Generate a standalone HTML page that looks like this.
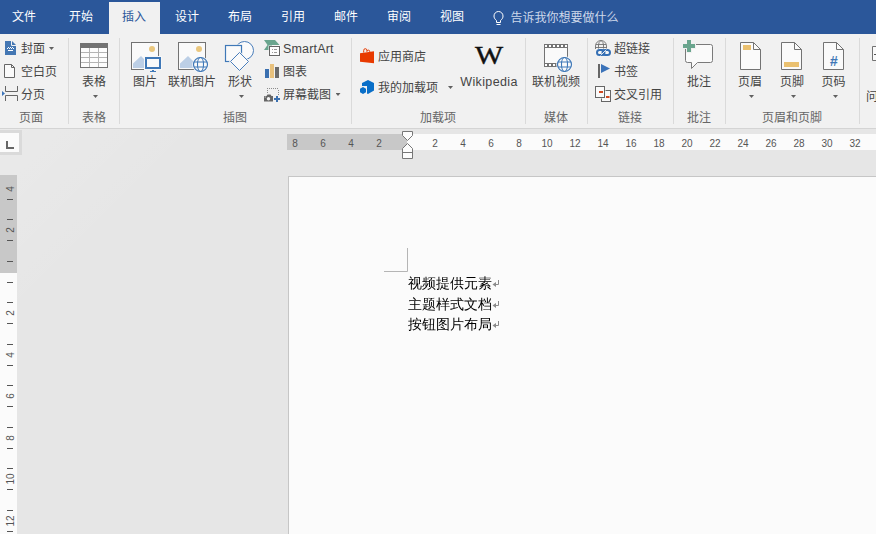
<!DOCTYPE html>
<html lang="zh-CN">
<head>
<meta charset="utf-8">
<title>Word</title>
<style>
*{box-sizing:border-box;margin:0;padding:0}
html,body{width:876px;height:534px;overflow:hidden;background:#e6e6e6}
body{position:relative;font-family:"Liberation Sans","Noto Sans CJK SC",sans-serif;font-size:12px;color:#444}
.abs{position:absolute}
#tabs{left:0;top:0;width:876px;height:34px;background:#2b579a}
.tab{position:absolute;top:1px;height:33px;line-height:33px;color:#fff;font-size:12px;white-space:nowrap}
#active{left:109px;top:2px;width:51px;height:32px;background:#f1f1f1}
#ribbon{left:0;top:34px;width:876px;height:94px;background:#f1f1f1}
#ribline{left:0;top:128px;width:876px;height:1px;background:#d4d4d4}
.sep{position:absolute;top:38px;width:1px;height:86px;background:#dadada}
.glabel{position:absolute;top:110px;height:16px;line-height:16px;font-size:12px;color:#666;white-space:nowrap;transform:translateX(-50%)}
.t{position:absolute;white-space:nowrap;font-size:12px;line-height:16px;color:#444}
.tc{transform:translateX(-50%)}
.arr{position:absolute;width:5px;height:3px;background:#606060;clip-path:polygon(0 0,100% 0,50% 100%)}
svg{position:absolute;overflow:visible}
#hruler{left:287px;top:134px;width:589px;height:16px;background:#fbfbfb}
#hrulerg{left:287px;top:134px;width:120px;height:16px;background:#c8c8c8}
.hn{position:absolute;top:136px;font-size:10px;line-height:16px;color:#555;transform:translateX(-50%);font-family:"Liberation Sans",sans-serif}
#vruler{left:0;top:175px;width:17px;height:359px;background:#fbfbfb}
#vrulerg{left:0;top:175px;width:17px;height:98px;background:#c8c8c8}
.vn{position:absolute;left:4.500px;width:12px;height:12px;font-size:10px;line-height:12px;color:#555;text-align:center;transform:rotate(-90deg);font-family:"Liberation Sans",sans-serif;white-space:nowrap}
.vt{position:absolute;left:7px;width:6px;height:1px;background:#555}
#lbox{left:-3px;top:130px;width:25px;height:25px;background:#fbfbfb;border:3px solid #dadada}
#page{left:288px;top:176px;width:600px;height:370px;background:#fbfbfb;border:1px solid #c6c6c6}
.doc{position:absolute;left:408px;font-family:"Liberation Serif","WenQuanYi Zen Hei",serif;font-size:14px;line-height:20px;color:#000;white-space:nowrap}
</style>
</head>
<body>
<div id="tabs" class="abs"></div>
<div id="active" class="abs"></div>
<div class="tab" style="left:12px">文件</div>
<div class="tab" style="left:69px">开始</div>
<div class="tab" style="left:122px;color:#2b579a">插入</div>
<div class="tab" style="left:175px">设计</div>
<div class="tab" style="left:228px">布局</div>
<div class="tab" style="left:281px">引用</div>
<div class="tab" style="left:334px">邮件</div>
<div class="tab" style="left:387px">审阅</div>
<div class="tab" style="left:440px">视图</div>
<div class="tab" style="left:510.500px;top:2px;color:#cdd8ea">告诉我你想要做什么</div>
<div id="ribbon" class="abs"></div>
<div id="ribline" class="abs"></div>

<!-- separators -->
<div class="sep" style="left:68px"></div>
<div class="sep" style="left:119px"></div>
<div class="sep" style="left:351px"></div>
<div class="sep" style="left:525px"></div>
<div class="sep" style="left:587px"></div>
<div class="sep" style="left:673px"></div>
<div class="sep" style="left:725px"></div>
<div class="sep" style="left:859px"></div>

<!-- group labels -->
<div class="glabel" style="left:31px">页面</div>
<div class="glabel" style="left:94px">表格</div>
<div class="glabel" style="left:235px">插图</div>
<div class="glabel" style="left:438px">加载项</div>
<div class="glabel" style="left:556px">媒体</div>
<div class="glabel" style="left:630px">链接</div>
<div class="glabel" style="left:699px">批注</div>
<div class="glabel" style="left:792px">页眉和页脚</div>



<!-- ribbon icons -->
<svg id="icons" width="876" height="130" viewBox="0 0 876 130" style="left:0;top:0" shape-rendering="auto">
<!-- lightbulb -->
<g fill="none" stroke="#fff" stroke-width="1">
<path d="M496.500,20.500 C494.500,19 494,17.500 494,16 a4.500,4.500 0 0 1 9,0 C503,17.500 502.500,19 500.500,20.500 V22.500 H496.500 Z"/>
<path d="M496.500,24.500 H500.500"/>
</g>
<!-- cover page -->
<path d="M5,41 H12 L16,45 V55 H5 Z" fill="#4477b3"/>
<path d="M11.500,41 V45.500 H16" fill="none" stroke="#f1f1f1" stroke-width="1"/>
<path d="M8,47h1v1h-1z M10,47h1v1h-1z M12,47h1v1h-1z M7,48h1v1h-1z M9,48h1v1h-1z M11,48h1v1h-1z M13,48h1v1h-1z" fill="#fff"/>
<rect x="8" y="50" width="5" height="1" fill="#fff"/>
<!-- blank page -->
<path d="M4.500,64.500 H11.500 L14.500,67.500 V77.500 H4.500 Z" fill="#fafafa" stroke="#666" stroke-width="1"/>
<path d="M11.500,64.500 V67.500 H14.500" fill="none" stroke="#666" stroke-width="1"/>
<!-- page break -->
<path d="M5.500,86 V91.500 H17.500 V86 M5.500,101 V95.500 H17.500 V101" fill="none" stroke="#666" stroke-width="1"/>
<path d="M2,91 L5,93.500 L2,96 Z" fill="#3b73b9"/>
<!-- table -->
<rect x="80.500" y="43.500" width="27" height="24" fill="#fdfdfd" stroke="#737373"/>
<rect x="80" y="43" width="28" height="5" fill="#737373"/>
<path d="M81,52.500 H107 M81,57.500 H107 M81,62.500 H107 M89.500,48 V67 M98.500,48 V67" stroke="#b4b4b4" stroke-width="1" fill="none"/>
<!-- picture -->
<rect x="131.500" y="42.500" width="27" height="27" fill="#fafafa" stroke="#737373"/>
<circle cx="152" cy="49" r="3" fill="#eac77e"/>
<path d="M133,68 V63.500 L141,56 L146,61 V68 Z" fill="#bccfe6"/>
<rect x="144" y="56" width="18" height="14" fill="#f8f8f8"/>
<rect x="146" y="58" width="14" height="10" fill="#fafafa" stroke="#3f78b7" stroke-width="2"/>
<path d="M150,71.500 H156 M152,70.500 H154" stroke="#3f78b7" stroke-width="1"/>
<!-- online picture -->
<rect x="178.500" y="42.500" width="27" height="27" fill="#fafafa" stroke="#737373"/>
<circle cx="199" cy="49" r="3" fill="#eac77e"/>
<path d="M180,68 V63.500 L188,56 L193,61 V68 Z" fill="#bccfe6"/>
<g transform="translate(200.500,64.500)">
<circle r="8.300" fill="#f8f8f8"/>
<circle r="7" fill="#fafafa" stroke="#3f78b7" stroke-width="1.200"/>
<ellipse rx="3" ry="7" fill="none" stroke="#3f78b7" stroke-width="1.100"/>
<path d="M-6.500,-2.500 H6.500 M-6.500,2.500 H6.500" stroke="#3f78b7" stroke-width="1.100" fill="none"/>
</g>
<!-- shapes -->
<circle cx="244.500" cy="50.500" r="9" fill="#fafafa" stroke="#4a7ebb" stroke-width="1"/>
<rect x="224.500" y="44.500" width="18" height="18" fill="#f6f6f6"/>
<rect x="225.500" y="45.500" width="16" height="16" fill="#fafafa" stroke="#3f78b7" stroke-width="1.200"/>
<path d="M239.500,51 L250,61.500 L239.500,72 L229,61.500 Z" fill="#f6f6f6"/>
<path d="M239.500,52.500 L248.500,61.500 L239.500,70.500 L230.500,61.500 Z" fill="#fafafa" stroke="#4a7ebb" stroke-width="1"/>
<!-- smartart -->
<path d="M264,40 H275 L279.500,45 H272 V50 H264 L267.500,45 Z" fill="#6aa58e"/>
<rect x="268.500" y="45.500" width="12" height="11" fill="#f8f8f8"/>
<rect x="269.500" y="46.500" width="10" height="9" fill="#fdfdfd" stroke="#666"/>
<path d="M272,49.500 H273 M274,49.500 H277 M272,52.500 H273 M274,52.500 H277" stroke="#999" stroke-width="1"/>
<!-- chart -->
<rect x="265" y="69" width="4" height="9" fill="#3b70b0"/>
<rect x="270" y="64" width="4" height="14" fill="#e8c17d"/>
<rect x="275" y="67" width="4" height="11" fill="#6b6b6b"/>
<!-- screenshot -->
<path d="M267,88.500 H279" stroke="#8c8c8c" stroke-width="1" stroke-dasharray="1 1"/>
<path d="M267.500,90 V94 M278.500,90 V96" stroke="#8c8c8c" stroke-width="1" stroke-dasharray="1 1"/>
<path d="M264,96 H266.500 L267.500,94.500 H270.500 L271.500,96 H273 V101.500 H264 Z" fill="#666"/>
<circle cx="268.500" cy="98.700" r="1.700" fill="#f4f4f4"/>
<rect x="264.700" y="96.500" width="1" height="1" fill="#fff"/>
<path d="M274,99 H280 M277,96 V102" stroke="#3b70b0" stroke-width="2"/>
<!-- store -->
<path d="M360,53.300 L374,51.200 V63.300 L360,61.700 Z" fill="#e83a00"/>
<path d="M363.700,52.500 V50.500 a1.600,1.800 0 0 1 3.200,0 V51.500 a1.400,1.400 0 0 1 2.800,0 V52" fill="none" stroke="#e83a00" stroke-width="1"/>
<!-- my addins -->
<path d="M368,80 L374,83 V90.500 L368,94 L367,93.500 V86 H362 V83 Z" fill="#0a6fc8"/>
<path d="M363,87 L366,88.700 V92.200 L363,94 L360,92.200 V88.700 Z" fill="#0a6fc8"/>
<!-- online video -->
<rect x="544.500" y="44.500" width="23" height="22" fill="#fafafa" stroke="#737373"/>
<rect x="544" y="44" width="24" height="4" fill="#737373"/>
<rect x="544" y="63" width="24" height="4" fill="#737373"/>
<path d="M545,46 H568 M545,65 H556" stroke="#fff" stroke-width="2" stroke-dasharray="2 2"/>
<g transform="translate(564.500,64.500)">
<circle r="8.300" fill="#f8f8f8"/>
<circle r="7" fill="#fafafa" stroke="#3f78b7" stroke-width="1.200"/>
<ellipse rx="3" ry="7" fill="none" stroke="#3f78b7" stroke-width="1.100"/>
<path d="M-6.500,-2.500 H6.500 M-6.500,2.500 H6.500" stroke="#3f78b7" stroke-width="1.100" fill="none"/>
</g>
<!-- hyperlink -->
<g fill="none" stroke="#707070" stroke-width="0.900">
<path d="M595.500,49 V46 a5.500,5.500 0 0 1 11,0 V49"/>
<path d="M596,44.500 H606 M595.500,47.500 H606.500"/>
<path d="M598.500,49 V45 Q598.500,42 601,40.500 Q603.500,42 603.500,45 V49"/>
</g>
<rect x="595.500" y="48.500" width="16" height="8" rx="3.500" fill="#f6f6f6"/>
<rect x="597" y="50" width="7.500" height="5" rx="2.500" fill="none" stroke="#3670b4" stroke-width="2"/>
<rect x="602.500" y="50" width="7.500" height="5" rx="2.500" fill="none" stroke="#3670b4" stroke-width="2"/>
<path d="M600.500,55.500 L604.500,51.500 M602.500,53.500 L606.500,49.500" stroke="#f6f6f6" stroke-width="0.800"/>
<!-- bookmark -->
<rect x="598" y="64" width="2" height="14" fill="#666"/>
<path d="M601,64 L610,68.500 L601,73 Z" fill="#3b73b9"/>
<!-- cross ref -->
<rect x="601.500" y="90.500" width="9" height="11" fill="#fafafa" stroke="#666"/>
<rect x="594.500" y="85.500" width="11" height="13" fill="#f4f4f4"/>
<rect x="595.500" y="86.500" width="9" height="11" fill="#fafafa" stroke="#666"/>
<rect x="599" y="91" width="4" height="2" fill="#d14a22"/>
<rect x="606" y="96" width="3.500" height="2" fill="#d14a22"/>
<!-- comment -->
<path d="M687.500,44.500 H710.500 a2,2 0 0 1 2,2 V60.500 a2,2 0 0 1 -2,2 H697.500 L691.500,68.500 V62.500 H687.500 a2,2 0 0 1 -2,-2 V46.500 a2,2 0 0 1 2,-2 Z" fill="#fafafa" stroke="#7a7a7a" stroke-width="1"/>
<path d="M682,43 H696 V49 H692 V53 H686 V49 H682 Z" fill="#f1f1f1"/>
<path d="M683,44 H687 V40 H691 V44 H695 V48 H691 V52 H687 V48 H683 Z" fill="#6aa58e"/>
<!-- header -->
<path d="M740.500,42.500 H753.500 L760.500,49.500 V69.500 H740.500 Z" fill="#fafafa" stroke="#737373"/>
<path d="M753.500,42.500 V49.500 H760.500" fill="none" stroke="#737373"/>
<rect x="743" y="45" width="8" height="5" fill="#eac06f"/>
<!-- footer -->
<path d="M781.500,42.500 H794.500 L801.500,49.500 V69.500 H781.500 Z" fill="#fafafa" stroke="#737373"/>
<path d="M794.500,42.500 V49.500 H801.500" fill="none" stroke="#737373"/>
<rect x="784" y="62" width="15" height="5" fill="#eac06f"/>
<!-- page number -->
<path d="M823.500,42.500 H836.500 L843.500,49.500 V69.500 H823.500 Z" fill="#fafafa" stroke="#737373"/>
<path d="M836.500,42.500 V49.500 H843.500" fill="none" stroke="#737373"/>
<text x="833.700" y="66" font-family="Liberation Sans, sans-serif" font-size="14" font-weight="bold" font-style="italic" fill="#3f78b7" text-anchor="middle">#</text>
<!-- partial icon right -->
<path d="M876,46.500 H872.500 V60.500 H876" fill="#fafafa" stroke="#737373"/>
<path d="M874,54.500 H876" stroke="#555"/>
</svg>

<!-- ribbon text -->
<div class="t" style="left:21px;top:41px">封面</div><div class="arr" style="left:49px;top:47px"></div>
<div class="t" style="left:21px;top:64px">空白页</div>
<div class="t" style="left:21px;top:87px">分页</div>
<div class="t tc" style="left:94px;top:74px">表格</div><div class="arr" style="left:93px;top:95px"></div>
<div class="t tc" style="left:145px;top:74px">图片</div>
<div class="t tc" style="left:192px;top:74px">联机图片</div>
<div class="t tc" style="left:240px;top:74px">形状</div><div class="arr" style="left:239px;top:95px"></div>
<div class="t" style="left:283px;top:41px;font-size:12.500px;letter-spacing:0.180px">SmartArt</div>
<div class="t" style="left:283px;top:64px">图表</div>
<div class="t" style="left:283px;top:87px">屏幕截图</div><div class="arr" style="left:335.500px;top:93px"></div>
<div class="t" style="left:378px;top:49px">应用商店</div>
<div class="t" style="left:378px;top:80px">我的加载项</div><div class="arr" style="left:448px;top:86px"></div>
<div class="t tc" style="left:489px;top:74px;font-size:12.500px;letter-spacing:0.370px">Wikipedia</div>
<div class="t tc" style="left:556px;top:74px">联机视频</div>
<div class="t" style="left:614px;top:41px">超链接</div>
<div class="t" style="left:614px;top:64px">书签</div>
<div class="t" style="left:614px;top:87px">交叉引用</div>
<div class="t tc" style="left:699px;top:74px">批注</div>
<div class="t tc" style="left:750px;top:74px">页眉</div><div class="arr" style="left:749px;top:95px"></div>
<div class="t tc" style="left:792px;top:74px">页脚</div><div class="arr" style="left:791px;top:95px"></div>
<div class="t tc" style="left:833.5px;top:74px">页码</div><div class="arr" style="left:833px;top:95px"></div>
<div class="t" style="left:866px;top:89px">问</div>

<!-- rulers -->
<div class="abs" style="left:0;top:129px;width:240px;height:200px;background:linear-gradient(135deg,rgba(255,255,255,0.160) 0,rgba(255,255,255,0.100) 60px,rgba(255,255,255,0) 150px)"></div>
<div id="hruler" class="abs"></div>
<div id="hrulerg" class="abs"></div>
<div id="vruler" class="abs"></div>
<div id="vrulerg" class="abs"></div>
<div id="lbox" class="abs"></div>
<div id="page" class="abs"></div>

<div class="hn" style="left:295px">8</div>
<div class="hn" style="left:323px">6</div>
<div class="hn" style="left:351px">4</div>
<div class="hn" style="left:379px">2</div>
<div class="hn" style="left:435px">2</div>
<div class="hn" style="left:463px">4</div>
<div class="hn" style="left:491px">6</div>
<div class="hn" style="left:519px">8</div>
<div class="hn" style="left:547px">10</div>
<div class="hn" style="left:575px">12</div>
<div class="hn" style="left:603px">14</div>
<div class="hn" style="left:631px">16</div>
<div class="hn" style="left:659px">18</div>
<div class="hn" style="left:687px">20</div>
<div class="hn" style="left:715px">22</div>
<div class="hn" style="left:743px">24</div>
<div class="hn" style="left:771px">26</div>
<div class="hn" style="left:799px">28</div>
<div class="hn" style="left:827px">30</div>
<div class="hn" style="left:855px">32</div>
<div class="vn" style="top:182.7px">4</div>
<div class="vn" style="top:224.2px">2</div>
<div class="vn" style="top:307.2px">2</div>
<div class="vn" style="top:348.7px">4</div>
<div class="vn" style="top:390.2px">6</div>
<div class="vn" style="top:431.7px">8</div>
<div class="vn" style="top:473.2px">10</div>
<div class="vn" style="top:514.7px">12</div>
<div class="vt" style="top:199px"></div>
<div class="vt" style="top:219px"></div>
<div class="vt" style="top:240px"></div>
<div class="vt" style="top:261px"></div>
<div class="vt" style="top:282px"></div>
<div class="vt" style="top:302px"></div>
<div class="vt" style="top:323px"></div>
<div class="vt" style="top:344px"></div>
<div class="vt" style="top:365px"></div>
<div class="vt" style="top:385px"></div>
<div class="vt" style="top:406px"></div>
<div class="vt" style="top:427px"></div>
<div class="vt" style="top:448px"></div>
<div class="vt" style="top:468px"></div>
<div class="vt" style="top:489px"></div>
<div class="vt" style="top:510px"></div>
<div class="vt" style="top:531px"></div>
<svg width="876" height="534" viewBox="0 0 876 534" style="left:0;top:0;pointer-events:none">
<!-- indent markers -->
<path d="M402.500,131.500 H412.500 V135.500 L407.500,140.500 L402.500,135.500 Z" fill="#fcfcfc" stroke="#777"/>
<path d="M407.500,143.500 L412.500,148.500 V158.500 H402.500 V148.500 Z" fill="#fcfcfc" stroke="#777"/>
<path d="M402.500,152.500 H412.500" stroke="#777"/>
<!-- L -->
<path d="M7,141 V148 H14" fill="none" stroke="#666" stroke-width="2"/>
<!-- crop mark -->
<path d="M384,271.500 H407.500 V248" fill="none" stroke="#b5b5b5"/>
<!-- paragraph marks -->
<path d="M498.500,280.0 V284.5 H495" fill="none" stroke="#8a8a8a" stroke-width="1"/>
<path d="M492.500,284.5 L496,282.0 V287.0 Z" fill="#8a8a8a"/>
<path d="M498.500,301.0 V305.5 H495" fill="none" stroke="#8a8a8a" stroke-width="1"/>
<path d="M492.500,305.5 L496,303.0 V308.0 Z" fill="#8a8a8a"/>
<path d="M498.500,321.0 V325.5 H495" fill="none" stroke="#8a8a8a" stroke-width="1"/>
<path d="M492.500,325.5 L496,323.0 V328.0 Z" fill="#8a8a8a"/>
</svg>
<div id="wiki" style="position:absolute;left:475px;top:41px;-webkit-text-stroke:0.400px #111;width:28px;height:30px;font-family:'Liberation Serif',serif;font-size:25.500px;line-height:30px;color:#111;text-align:center;white-space:nowrap"><span style="display:inline-block;transform:scaleX(1.170)">W</span></div>

<div class="doc" style="top:274px">视频提供元素</div>
<div class="doc" style="top:295px">主题样式文档</div>
<div class="doc" style="top:315px">按钮图片布局</div>
</body>
</html>
